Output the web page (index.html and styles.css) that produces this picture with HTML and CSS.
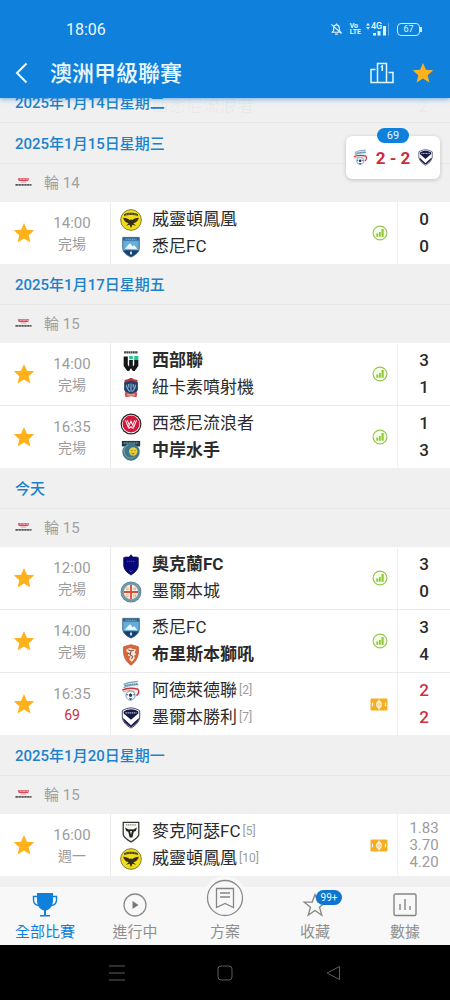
FILE: index.html
```html
<!DOCTYPE html>
<html lang="zh-Hant">
<head>
<meta charset="UTF-8" />
<meta name="viewport" content="width=device-width, initial-scale=1" />
<title>澳洲甲級聯賽</title>
<link rel="stylesheet" href="styles.css">
</head>
<body>

<!-- shared icons and crests -->
<svg class="sprite" aria-hidden="true">
  <symbol id="star" viewBox="0 0 24 24"><path fill="#ffb11b" d="M12 1l3.2 7.4 8 .7-6.100 5.300 1.900 7.900L12 18.100 5 22.300l1.900-7.900L.8 9.100l8-.7z"/></symbol>
  <symbol id="stats" viewBox="0 0 16 16"><circle cx="8" cy="8" r="6.900" fill="#f8fde9" stroke="#93c654" stroke-width="1.200"/><path fill="#8cca3c" d="M4.300 8.500h2v3.300h-2zM7 7h1.800v4.800H7zM9.500 4h2.200v7.800H9.500z"/></symbol>
  <symbol id="field" viewBox="0 0 18 13"><rect x=".5" y=".5" width="17" height="12" rx="1" fill="#f5ae20"/><path d="M9 1.500v10M2.500 4.800v3.500M15.500 4.800v3.500" stroke="#fff" stroke-width="1.200"/><ellipse cx="9" cy="6.500" rx="2.200" ry="3" fill="none" stroke="#fff" stroke-width="1.200"/></symbol>
  <symbol id="league" viewBox="0 0 18 10"><path fill="#d8485a" d="M3 1h12l-1 3H4z"/><path stroke="#f5d5d8" stroke-width=".8" d="M5 2.200h2M8 2.200h3M12 2.200h2"/><path fill="#e8909a" d="M6 4.500h6v1H6z"/><path fill="none" stroke="#555" stroke-width="1.800" stroke-dasharray="2.600 .5" d="M.5 8h17"/></symbol>
  <symbol id="wellington" viewBox="0 0 24 24"><circle cx="12" cy="12" r="11.300" fill="#f1dc19" stroke="#7d7424" stroke-width="1"/><path fill="#47421b" d="M4.500 5.500c4-2 11-2 15 0v2.300c-4-1.500-11-1.500-15 0z"/><path stroke="#b9ab1c" stroke-width=".7" d="M7 5v2M10 4.500v2M13 4.500v2M16 5v2"/><path fill="#332f14" d="M3.500 9.500c3 .4 5.500 1 7.500 2.800l1-1.300 1 1.300c2-1.800 4.500-2.400 7.500-2.800-.7 3-2.500 5.200-6 6l3 2.800-4-1.200L12 21l-1.500-3.900-4 1.200 3-2.800c-3.500-.8-5.300-3-6-6z"/></symbol>
  <symbol id="sydney" viewBox="0 0 24 24"><path fill="#67add9" stroke="#365f86" d="M3 1.500h18V13c0 5-4.500 8-9 10-4.500-2-9-5-9-10z"/><path fill="#245f97" d="M3.500 2h17v3h-17z"/><path stroke="#a8c9e0" stroke-width="1" stroke-dasharray="1.500 .7" d="M6 3.500h12"/><path fill="#eaf5fc" d="M5 14c2-1 3-4 6-6 1 1 2 2 2.500 3.500L15 10c2 1 3 3 4 4.500z"/><path fill="#163e6e" d="M4 15.500h16c-1 3-4 5.300-8 7-4-1.700-7-4-8-7z"/><path fill="#d9edf8" d="M12 16l1.300 2.500L12 21l-1.300-2.500z"/></symbol>
  <symbol id="western" viewBox="0 0 24 24"><path fill="none" stroke="#444" stroke-width="2.400" stroke-dasharray="2 .4" d="M4.500 2.500h15"/><path fill="#151515" d="M4 7h4.500v9l1.500 2.200V11h4v7.200l1.500-2.200V11H20v6.500L16 23h-2l-2-3-2 3H8l-4-5.500z"/><path fill="#29c39a" d="M10 6.500h4V10h-4zM15.500 6.500H20V11h-4.500z"/></symbol>
  <symbol id="jets" viewBox="0 0 24 24"><path fill="#bc3546" d="M5 3c4 0 5-2 7-2s3 2 7 2v4H5z"/><path fill="#243e69" d="M4.500 6C8 4.500 10 5.500 12 3.800 14 5.500 16 4.500 19.500 6v7c0 3-4 6-7.500 6s-7.500-3-7.500-6z"/><path fill="none" stroke="#7eb4d0" stroke-width="1.300" d="M7 8.500c0 4 2 5 3.500 7.500M17 8.500c0 4-2 5-3.500 7.500M12 7v9M9.500 7.500v4M14.500 7.500v4"/><path fill="#c8504e" d="M5 17l3-.5 4 1.800 4-1.800 3 .5-1 5-6-1-6 1z"/><path stroke="#f2d5cc" stroke-width="1" d="M7.500 19.500h9"/></symbol>
  <symbol id="wanderers" viewBox="0 0 24 24"><circle cx="12" cy="12" r="11.400" fill="#282224"/><circle cx="12" cy="12" r="10.100" fill="#fff"/><circle cx="12" cy="12" r="9.200" fill="#d5163c"/><path fill="none" stroke="#fff" stroke-width="1.100" d="M6 8l3 7.500 3-6.500 3 6.500L18 8M8 8l2 5M16 8l-2 5M9.500 17l2.500-2 2.500 2"/></symbol>
  <symbol id="mariners" viewBox="0 0 24 24"><path fill="#183c4c" d="M2 1h20v6H2z"/><path stroke="#9aa38c" stroke-width="1.400" stroke-dasharray="2 .6" d="M4 3.300h16"/><circle cx="12" cy="13" r="9.500" fill="#3d748f"/><circle cx="14.500" cy="12.500" r="4.600" fill="#eace38"/><path fill="none" stroke="#8fae96" stroke-width="1" d="M9 5.500c-4 1-6 6-3.500 10.500 2 4 7 5 11 2"/><path stroke="#675f28" fill="none" d="M12.500 11.500h1M16 11.500h1M12.500 14.500c1.500 1 2.500.8 3.500-.5"/></symbol>
  <symbol id="auckland" viewBox="0 0 24 24"><path fill="#070779" stroke="#11113e" stroke-width=".8" d="M12 .8l2 2.600c2 0 4.500-.5 6 .6v8c0 5-3.500 8-8 11-4.500-3-8-6-8-11V4c1.500-1.100 4-.6 6-.6z"/><path stroke="#5757a8" stroke-width="1" stroke-dasharray="1.500 .6" d="M7.500 8h9"/><path fill="none" stroke="#8b8bd0" stroke-width=".8" d="M10.500 18l1.500 1.500 1.500-1.500"/></symbol>
  <symbol id="city" viewBox="0 0 24 24"><circle cx="12" cy="12" r="11.400" fill="#5c7f90"/><circle cx="12" cy="12" r="10.600" fill="#7fa9b6"/><circle cx="12" cy="12" r="9.300" fill="none" stroke="#55798a" stroke-width="1" stroke-dasharray="1.600 .8"/><circle cx="12" cy="12" r="7.800" fill="#f7f0e8"/><path stroke="#dc4b3b" stroke-width="2" d="M12 4.200v15.600M4.200 12h15.600"/><path fill="none" stroke="#e3b36c" stroke-width=".9" d="M7 7.500h2v2H7zM15 7.500h2v2h-2zM7 15h2v2H7zM15 15h2v2h-2z"/></symbol>
  <symbol id="brisbane" viewBox="0 0 24 24"><path fill="#dc6437" stroke="#a8573c" stroke-width=".8" d="M4 3l5-1.500 3-.7 3 .7L20 3c1 7-.5 15-8 20.200C4.500 18 3 10 4 3z"/><path fill="#f7e6d7" d="M7 6l4-2 3 1.500 3.500.5-1.500 3 1.500 2.500-2 1 .5 3-3 4-3-3 1.500-3-3-1 1-3-2.500-1z"/><path fill="none" stroke="#5d4238" stroke-width="1" d="M9 6.500l3 1 3-.5M12 8l-1 4 3 1.500-1.500 3M8.500 10l2.500 1"/></symbol>
  <symbol id="adelaide" viewBox="0 0 24 24"><path fill="#e8f0f5" d="M4 3l16-2v15l-8 7-8-7z"/><path fill="none" stroke="#78a6bc" stroke-width="1.300" d="M4 5c5-3 10-3 15.500-3.500M4 8.500c5-3 10-3 16-3.500"/><path stroke="#44799a" stroke-width="1.400" stroke-dasharray="1.500 .6" d="M5 6.500c5-2 9-2 14-2.200" fill="none"/><path fill="none" stroke="#ca3446" stroke-width="1.600" d="M2.500 11c6-3 11-2.500 17-1 2 2 1 5-1.500 7"/><path fill="none" stroke="#d6a35c" stroke-width="1" d="M3 13c5-2 9-2 13 0"/><circle cx="11.500" cy="17" r="5" fill="#f5f8fa" stroke="#6ba0bd"/><path fill="#233c61" d="M11.500 14.500l2 1.500-.8 2.300h-2.400L9.500 16zM7 15l1.500.5-.8 2zM16 15l-1.500.5.8 2zM9.500 20l4 .2-2 2z"/></symbol>
  <symbol id="victory" viewBox="0 0 24 24"><path fill="#fff" stroke="#33385a" stroke-width="1" d="M2.500 4C5 2.500 8.500 1 12 1s7 1.500 9.500 3v8c-1 5-5 8.500-9.500 11-4.500-2.500-8.500-6-9.500-11z"/><path fill="#171b47" d="M4 5c5-3.500 11-3.500 16 0v2l-8 7-8-7z"/><path stroke="#b5b9d0" stroke-width="1.400" stroke-dasharray="1.600 .6" d="M6 6.300h12"/><path fill="#171b47" d="M3.500 12l8.500 8 8.500-8v1.500c-1.500 4-5 6.500-8.500 8.500-3.500-2-7-4.500-8.500-8.500z"/></symbol>
  <symbol id="macarthur" viewBox="0 0 24 24"><path fill="#f7f7f3" stroke="#33372f" stroke-width="1.400" d="M3.500 1.500h17V15c-1 3.500-4.500 5.500-8.500 7.800C8 20.500 4.500 18.500 3.500 15z"/><path stroke="#878c7d" stroke-width="1.400" stroke-dasharray="1.400 .6" d="M6.500 4.300h11"/><path fill="#20241f" d="M5.500 7l4 2.300L12 9l2.500.3 4-2.300-1.300 4-2.200.8L13.500 18h-3L9 11.800 6.800 11z"/><path fill="#fff" d="M11 11h2l-1 4z"/></symbol>
</svg>

<header class="top">
  <div class="status-bar">
    <span class="clock">18:06</span>
    <svg class="bell" viewBox="0 0 14 14" fill="none" stroke="#e3f4ff" stroke-width="1.300"><path d="M2.500 10.500h9L10 8.500V6c0-2-1.200-3.500-3-3.500S4 4 4 6v2.500zM5.500 12.500h3M7 1v1.500M1.500 2l11 10"/></svg>
    <span class="volte"><span>Vo</span><span>LTE</span></span>
    <span class="signal">
      <span>4G</span>
      <svg viewBox="0 0 26 14"><path fill="#e3f4ff" d="M3 1l2 2.500H1zM3 7.500L1 5h4zM8 11h3v2.500H8zM12.500 9h3v4.500h-3zM18 4h3v9.500h-3z"/><path fill="#5aa9e8" d="M23 1h1v12.500h-1z"/></svg>
    </span>
    <span class="battery">67</span>
  </div>
  <div class="app-bar">
    <button class="icon-btn back" aria-label="返回"><svg viewBox="0 0 14 22" fill="none" stroke="#e9fbff" stroke-width="2"><path d="M11.500 1.500L2 11l9.500 9.500"/></svg></button>
    <h1>澳洲甲級聯賽</h1>
    <button class="icon-btn podium" aria-label="排名"><svg viewBox="0 0 24 22" fill="none" stroke="#e3f7ff" stroke-width="1.500"><path d="M7.500 20.500V1.500h9v19zM5.500 7.500H1v13h22V10.500h-4.500M10.800 4.800l1.500-.8v5"/></svg></button>
    <button class="icon-btn fav" aria-label="收藏聯賽"><svg><use href="#star"/></svg></button>
  </div>
</header>

<aside class="live-card">
  <span class="minute">69</span>
  <svg class="crest"><use href="#adelaide"/></svg>
  <strong>2 - 2</strong>
  <svg class="crest"><use href="#victory"/></svg>
</aside>

<main class="fixtures">
  <section>
    <h2 class="date stuck">2025年1月14日星期二 <span class="under"><span>西悉尼流浪者</span><span>2</span></span></h2>
  </section>

  <section>
    <h2 class="date">2025年1月15日星期三</h2>
    <h3 class="round"><svg><use href="#league"/></svg>輪 14</h3>
    <article class="match">
      <div class="when"><button class="icon-btn" aria-label="收藏"><svg><use href="#star"/></svg></button><p>14:00<span>完場</span></p></div>
      <div class="teams">
        <p><svg class="crest"><use href="#wellington"/></svg>威靈頓鳳凰</p>
        <p><svg class="crest"><use href="#sydney"/></svg>悉尼FC</p>
        <svg class="stats"><use href="#stats"/></svg>
      </div>
      <div class="score"><b>0</b><b>0</b></div>
    </article>
  </section>

  <section>
    <h2 class="date">2025年1月17日星期五</h2>
    <h3 class="round"><svg><use href="#league"/></svg>輪 15</h3>
    <article class="match">
      <div class="when"><button class="icon-btn" aria-label="收藏"><svg><use href="#star"/></svg></button><p>14:00<span>完場</span></p></div>
      <div class="teams">
        <p class="winner"><svg class="crest"><use href="#western"/></svg>西部聯</p>
        <p><svg class="crest"><use href="#jets"/></svg>紐卡素噴射機</p>
        <svg class="stats"><use href="#stats"/></svg>
      </div>
      <div class="score"><b>3</b><b>1</b></div>
    </article>
    <article class="match">
      <div class="when"><button class="icon-btn" aria-label="收藏"><svg><use href="#star"/></svg></button><p>16:35<span>完場</span></p></div>
      <div class="teams">
        <p><svg class="crest"><use href="#wanderers"/></svg>西悉尼流浪者</p>
        <p class="winner"><svg class="crest"><use href="#mariners"/></svg>中岸水手</p>
        <svg class="stats"><use href="#stats"/></svg>
      </div>
      <div class="score"><b>1</b><b>3</b></div>
    </article>
  </section>

  <section>
    <h2 class="date">今天</h2>
    <h3 class="round"><svg><use href="#league"/></svg>輪 15</h3>
    <article class="match">
      <div class="when"><button class="icon-btn" aria-label="收藏"><svg><use href="#star"/></svg></button><p>12:00<span>完場</span></p></div>
      <div class="teams">
        <p class="winner"><svg class="crest"><use href="#auckland"/></svg>奧克蘭FC</p>
        <p><svg class="crest"><use href="#city"/></svg>墨爾本城</p>
        <svg class="stats"><use href="#stats"/></svg>
      </div>
      <div class="score"><b>3</b><b>0</b></div>
    </article>
    <article class="match">
      <div class="when"><button class="icon-btn" aria-label="收藏"><svg><use href="#star"/></svg></button><p>14:00<span>完場</span></p></div>
      <div class="teams">
        <p><svg class="crest"><use href="#sydney"/></svg>悉尼FC</p>
        <p class="winner"><svg class="crest"><use href="#brisbane"/></svg>布里斯本獅吼</p>
        <svg class="stats"><use href="#stats"/></svg>
      </div>
      <div class="score"><b>3</b><b>4</b></div>
    </article>
    <article class="match live">
      <div class="when"><button class="icon-btn" aria-label="收藏"><svg><use href="#star"/></svg></button><p>16:35<span>69</span></p></div>
      <div class="teams">
        <p><svg class="crest"><use href="#adelaide"/></svg>阿德萊德聯<small>[2]</small></p>
        <p><svg class="crest"><use href="#victory"/></svg>墨爾本勝利<small>[7]</small></p>
        <svg class="field"><use href="#field"/></svg>
      </div>
      <div class="score"><b>2</b><b>2</b></div>
    </article>
  </section>

  <section>
    <h2 class="date">2025年1月20日星期一</h2>
    <h3 class="round"><svg><use href="#league"/></svg>輪 15</h3>
    <article class="match">
      <div class="when"><button class="icon-btn" aria-label="收藏"><svg><use href="#star"/></svg></button><p>16:00<span>週一</span></p></div>
      <div class="teams">
        <p><svg class="crest"><use href="#macarthur"/></svg>麥克阿瑟FC<small>[5]</small></p>
        <p><svg class="crest"><use href="#wellington"/></svg>威靈頓鳳凰<small>[10]</small></p>
        <svg class="field"><use href="#field"/></svg>
      </div>
      <div class="score odds"><span>1.83</span><span>3.70</span><span>4.20</span></div>
    </article>
  </section>
</main>

<nav class="tabs">
  <a href="#" class="active">
    <svg viewBox="0 0 26 26"><path fill="#0f80dc" d="M5 1h16v7c0 6-3 9.500-7 10.500v4.500h4v1.500H8V23h4v-4.500C8 17.500 5 14 5 8z"/><path fill="none" stroke="#0f80dc" stroke-width="1.400" d="M5 4.500H1.500V8c0 3 2 5 5 5.500M21 4.500h3.500V8c0 3-2 5-5 5.500"/></svg>
    全部比賽
  </a>
  <a href="#">
    <svg viewBox="0 0 26 26"><circle cx="13" cy="13" r="11" fill="none" stroke="#8c8c8c" stroke-width="1.300"/><path fill="#777" d="M10.500 9l6 4-6 4z"/></svg>
    進行中
  </a>
  <a href="#" class="plan">
    <svg viewBox="0 0 44 44"><circle cx="22" cy="22" r="22" fill="#f8f8f8"/><circle cx="22" cy="22" r="17.500" fill="none" stroke="#8c8c8c" stroke-width="1.300"/><path fill="none" stroke="#858585" stroke-width="1.300" d="M13.500 12.500h17v19L22 27.500l-8.500 4zM17 17h10M17 21h10"/></svg>
    方案
  </a>
  <a href="#">
    <svg viewBox="0 0 26 26" fill="none" stroke="#858585" stroke-width="1.300"><path d="M13 2.500l2.800 7.500 8 .2-6.300 5 2.300 8L13 18.500l-6.800 4.700 2.300-8-6.300-5 8-.2z"/></svg>
    收藏
    <span class="count">99+</span>
  </a>
  <a href="#">
    <svg viewBox="0 0 26 26" fill="none" stroke="#858585" stroke-width="1.400"><rect x="2" y="2" width="22" height="21.500" rx="1.500"/><path d="M8 12v6M13 7v11M18 14v4"/></svg>
    數據
  </a>
</nav>

<footer class="system-nav">
  <button class="icon-btn" aria-label="最近"><svg viewBox="0 0 16 16"><path d="M0 1h16M0 8h16M0 15h16"/></svg></button>
  <button class="icon-btn" aria-label="主畫面"><svg viewBox="0 0 16 16"><rect x="1" y="1" width="14" height="14" rx="3"/></svg></button>
  <button class="icon-btn" aria-label="上一頁"><svg viewBox="0 0 16 16"><path d="M14.500 1.500v13L2 8z"/></svg></button>
</footer>

</body>
</html>
```

FILE: styles.css
```css
* {
  box-sizing: border-box;
}
body {
  margin: 0;
  height: 100vh;
  display: flex;
  flex-direction: column;
  position: relative;
  background: #f0f0f0;
  font-family: Roboto, "Noto Sans CJK TC", sans-serif;
  color: #2b2b2b;
}
h1, h2, h3, p {
  margin: 0;
}
svg {
  display: block;
}
.sprite {
  position: absolute;
  width: 0;
  height: 0;
}
.icon-btn {
  display: block;
  padding: 0;
  border: none;
  background: none;
  cursor: pointer;
}
.icon-btn svg {
  width: 22px;
  height: 22px;
}
.crest {
  width: 22px;
  height: 22px;
  flex: none;
}

/* header */
.top {
  position: relative;
  z-index: 2;
  flex: none;
  background: #0f80dc;
  color: #e9f8ff;
  box-shadow: 0 1px 5px rgba(15, 128, 220, 0.6);
}
.status-bar {
  height: 48px;
  padding: 10px 28px 0 66px;
  display: flex;
  align-items: center;
}
.clock {
  flex: 1;
  font-size: 16px;
}
.bell {
  width: 13px;
  height: 14px;
}
.volte {
  margin-left: 7px;
  font-size: 7px;
  line-height: 6px;
  font-weight: 700;
}
.volte span {
  display: block;
}
.signal {
  position: relative;
  margin-left: 4px;
}
.signal svg {
  width: 26px;
  height: 14px;
}
.signal span {
  position: absolute;
  left: 6px;
  top: 0;
  font-size: 9px;
  line-height: 8px;
  font-weight: 500;
}
.battery {
  position: relative;
  width: 23px;
  height: 13px;
  margin-left: 6px;
  margin-right: 2px;
  border: 1px solid #cdeaff;
  border-radius: 4px;
  font-size: 9px;
  line-height: 11px;
  text-align: center;
}
.battery::after {
  content: "";
  position: absolute;
  right: -3px;
  top: 3px;
  width: 2px;
  height: 5px;
  background: #cdeaff;
}
.app-bar {
  height: 50px;
  padding: 0 16px 0 15px;
  display: flex;
  align-items: center;
}
.back svg {
  width: 14px;
}
.app-bar h1 {
  flex: 1;
  margin-left: 21px;
  padding-top: 2px;
  font-size: 22px;
  line-height: 30px;
  font-weight: 500;
}
.podium svg {
  width: 24px;
}
.fav {
  margin-left: 18px;
}

/* floating live score */
.live-card {
  position: absolute;
  z-index: 1;
  right: 10px;
  top: 136px;
  width: 94px;
  height: 43px;
  padding: 0 6px;
  display: flex;
  align-items: center;
  justify-content: space-between;
  background: #fff;
  border-radius: 6px;
  box-shadow: 0 1px 4px rgba(0, 0, 0, 0.2);
}
.live-card .crest {
  width: 17px;
  height: 19px;
}
.live-card strong {
  font-size: 17px;
  color: #c62f40;
}
.minute {
  position: absolute;
  top: -8px;
  left: 31px;
  width: 32px;
  border-radius: 8px;
  background: #0f80dc;
  color: #e9f8ff;
  font-size: 11px;
  line-height: 15px;
  text-align: center;
}

/* fixtures, scrolled partly under the header */
.fixtures {
  flex: 1;
  min-height: 0;
  margin-top: -16px;
  overflow: hidden;
}
.date {
  height: 41px;
  padding-top: 1px;
  padding-left: 15px;
  border-bottom: 1px solid #e8e8e8;
  font-size: 15px;
  line-height: 40px;
  font-weight: 500;
  color: #1c82cb;
}
.stuck {
  position: relative;
}
.under {
  position: absolute;
  top: 4px;
  left: 152px;
  right: 22px;
  display: flex;
  justify-content: space-between;
  font-size: 17px;
  font-weight: 400;
  color: rgba(0, 0, 0, 0.04);
}
.round {
  height: 38px;
  padding-left: 15px;
  padding-bottom: 3px;
  display: flex;
  align-items: center;
  font-size: 15px;
  font-weight: 400;
  color: #a0a0a0;
}
.round svg {
  width: 17px;
  height: 10px;
  margin-right: 12px;
}
.match {
  display: grid;
  grid-template-columns: 111px 1fr 53px;
  height: 62px;
  background: #fff;
}
.match + .match {
  height: 63px;
  border-top: 1px solid #ebebeb;
}
.when {
  display: flex;
  align-items: center;
  padding-left: 13px;
  border-right: 1px solid #ececec;
}
.when p {
  flex: 1;
  padding-top: 1px;
  padding-right: 1px;
  font-size: 15px;
  line-height: 21px;
  text-align: center;
  color: #9c9c9c;
}
.when span {
  display: block;
  font-size: 14px;
}
.live .when span,
.live .score {
  color: #cb2f40;
}
.teams {
  display: grid;
  grid-template-columns: 1fr 18px;
  grid-template-rows: 27px 27px;
  align-content: center;
  padding: 0 9px;
}
.teams p {
  display: flex;
  align-items: center;
  font-size: 17px;
  line-height: 27px;
  white-space: nowrap;
}
.teams .crest {
  margin-right: 10px;
}
.teams .winner {
  font-weight: 700;
}
.teams small {
  margin-left: 2px;
  font-size: 12px;
  color: #9c9c9c;
}
.stats, .field {
  grid-column: 2;
  grid-row: 1 / 3;
  align-self: center;
  justify-self: end;
  width: 16px;
  height: 16px;
}
.field {
  width: 18px;
  height: 13px;
}
.score {
  display: flex;
  flex-direction: column;
  justify-content: center;
  border-left: 1px solid #f0f0f0;
  font-size: 17px;
  line-height: 27px;
  text-align: center;
}
.score b {
  font-weight: 500;
}
.odds {
  font-size: 15px;
  line-height: 17px;
  color: #9c9c9c;
}

/* bottom tabs */
.tabs {
  flex: none;
  height: 58px;
  display: grid;
  grid-template-columns: repeat(5, 1fr);
  background: #f8f8f8;
}
.tabs a {
  position: relative;
  display: flex;
  flex-direction: column;
  align-items: center;
  padding-top: 5px;
  font-size: 15px;
  line-height: 28px;
  color: #8f8f8f;
  text-decoration: none;
}
.tabs svg {
  width: 26px;
  height: 26px;
}
.tabs .active {
  color: #0f80dc;
}
.tabs .plan svg {
  width: 44px;
  height: 44px;
  margin-top: -16px;
  margin-bottom: -2px;
}
.count {
  position: absolute;
  top: 3px;
  left: 50%;
  width: 26px;
  margin-left: 1px;
  border-radius: 8px;
  background: #0f76d0;
  color: #e9f8ff;
  font-size: 10px;
  line-height: 15px;
  text-align: center;
}

/* system buttons */
.system-nav {
  flex: none;
  height: 55px;
  display: flex;
  justify-content: center;
  align-items: center;
  gap: 92px;
  background: #000;
}
.system-nav svg {
  width: 16px;
  height: 16px;
  fill: none;
  stroke: #5c5c5c;
  stroke-width: 1;
}
```
